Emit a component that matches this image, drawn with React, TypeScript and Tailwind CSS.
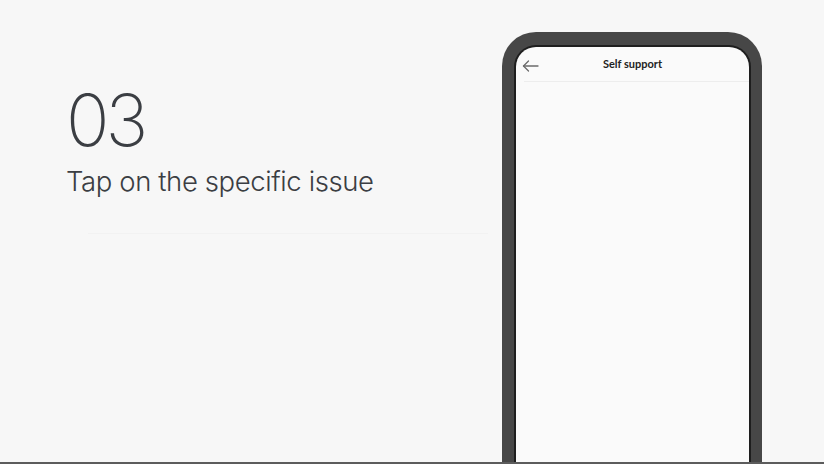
import React from 'react'

const BackArrow = () => (
    <svg width="17" height="12" viewBox="0 0 17 12" fill="none" stroke="#6b6b6b" strokeWidth="1.3" strokeLinecap="round" strokeLinejoin="round">
        <path d="M16 6H1.5" />
        <path d="M6.5 1 1.5 6l5 5" />
    </svg>
)

const Phone: React.FC = () => {
    return (
        <div className="mt-[32px] w-[260px] h-[480px] rounded-t-[34px] bg-[#474747] pt-[13px] px-[11px] pl-[12px]">
            <div className="h-full rounded-t-[22px] bg-[#1e1e1e] p-[2px] pb-0">
                <div className="h-full rounded-t-[20px] bg-[#fafafa]">
                    <div className="relative flex items-center justify-center h-[34px] pt-[1px]">
                        <div className="absolute left-[6px] top-[13px]">
                            <BackArrow />
                        </div>
                        <span className="text-[11px] font-bold text-[#222] font-['Lato',sans-serif]">Self support</span>
                    </div>
                    <div className="ml-[8px] h-px bg-[#ededed]" />
                </div>
            </div>
        </div>
    )
}

export default function App() {
    return (
        <div className="w-[824px] h-[464px] overflow-hidden bg-[#f7f7f7] border-b-2 border-[#5c5c5c] flex">
            <div className="w-[502px] shrink-0 pl-[66px] pt-[80px] font-['Inter',sans-serif] text-[#3b3e43]">
                <div className="text-[72px] leading-[80px] font-extralight tracking-[-4px]">03</div>
                <div className="mt-[3px] text-[27.5px] leading-[36px] font-light tracking-[-0.4px]">Tap on the specific issue</div>
                <div className="mt-[34px] ml-[22px] w-[400px] h-px bg-[#f2f2f2]" />
            </div>
            <Phone />
        </div>
    )
}
